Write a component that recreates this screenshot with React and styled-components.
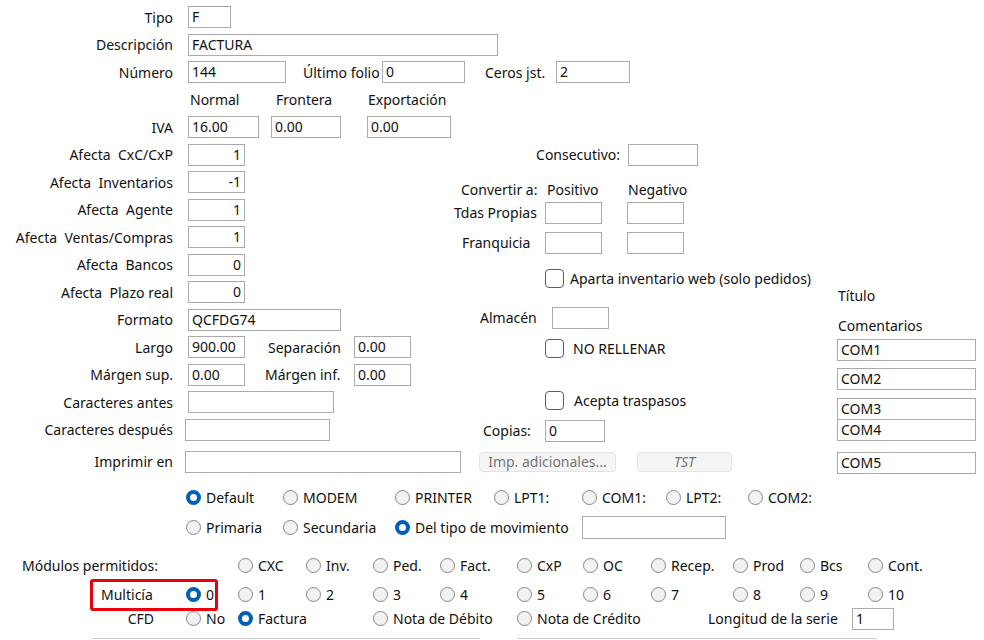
import styled, { createGlobalStyle } from 'styled-components';

const GlobalStyle = createGlobalStyle`
    html, body {
        margin: 0;
        padding: 0;
        background: #ffffff;
    }
    body {
        font-family: "Noto Sans", "Liberation Sans", sans-serif;
        font-size: 14px;
        color: #111;
    }
`;

const Page = styled.div`
    width: 984px;
    height: 640px;
    overflow: hidden;
    padding-top: 3.5px;
    box-sizing: border-box;
`;

const Row = styled.div`
    display: flex;
    align-items: center;
    height: ${p => p.$h || 27.5}px;
    margin-top: ${p => p.$mt || 0}px;
    padding-left: ${p => p.$pl || 0}px;
`;

const Label = styled.span`
    display: inline-block;
    width: ${p => p.$w || 175}px;
    text-align: ${p => p.$left ? 'left' : 'right'};
    padding-right: ${p => p.$pr || 0}px;
    box-sizing: border-box;
    white-space: pre;
    flex: none;
`;

const Text = styled.span`
    white-space: pre;
    flex: none;
    margin-left: ${p => p.$ml || 0}px;
    width: ${p => p.$w ? `${p.$w}px` : 'auto'};
`;

const Field = styled.div`
    flex: none;
    box-sizing: border-box;
    width: ${p => p.$w}px;
    height: ${p => p.$h || 22}px;
    margin-left: ${p => p.$ml || 0}px;
    margin-top: ${p => p.$mt || 0}px;
    border: 1px solid #ababab;
    background: #fff;
    padding: 0 3px;
    line-height: 20px;
    text-align: ${p => p.$right ? 'right' : 'left'};
    white-space: nowrap;
    overflow: hidden;
`;

const Main = styled.div`
    display: grid;
    grid-template-columns: 836px 1fr;
`;

const Columns = styled.div`
    display: grid;
    grid-template-columns: 440px 1fr;
`;

const Column = styled.div`
    display: flex;
    flex-direction: column;
`;

const Box = styled.span`
    flex: none;
    width: 19px;
    height: 19px;
    box-sizing: border-box;
    border: 1.5px solid #5d5d5d;
    border-radius: 4px;
    background: #fff;
    margin-right: ${p => p.$gap || 6}px;
`;

const Button = styled.div`
    flex: none;
    box-sizing: border-box;
    width: ${p => p.$w}px;
    height: 20px;
    margin-left: ${p => p.$ml || 0}px;
    border: 1px solid #e3e3e3;
    border-radius: 4px;
    background: #f5f5f5;
    color: #777;
    font-style: ${p => p.$italic ? 'italic' : 'normal'};
    text-align: center;
    line-height: 18px;
`;

const Dot = styled.span`
    flex: none;
    width: 15px;
    height: 15px;
    box-sizing: border-box;
    border-radius: 50%;
    margin-right: 5px;
    border: ${p => p.$on ? '4.5px solid #005fb8' : '1px solid #878787'};
    background: ${p => p.$on ? '#fff' : '#f2f2f2'};
`;

const RadioItem = styled.label`
    display: flex;
    align-items: center;
    flex: none;
    width: ${p => p.$w ? `${p.$w}px` : 'auto'};
    white-space: nowrap;
    grid-column: ${p => p.$col || 'auto'};
`;

const Radio = ({ on, children, w, col }) => (
    <RadioItem $w={w} $col={col}>
        <Dot $on={on} />
        {children}
    </RadioItem>
);

const Grid = styled.div`
    display: grid;
    grid-template-columns: 186px 52px 68px 67px 67px 77px 66px 68px 82px 67px 68px 1fr;
    align-items: center;
    height: ${p => p.$h || 22}px;
    margin-top: ${p => p.$mt || 0}px;
`;

const GridLabel = styled.span`
    grid-column: 1;
    padding-left: ${p => p.$pl || 0}px;
    padding-right: ${p => p.$pr || 0}px;
    text-align: ${p => p.$right ? 'right' : 'left'};
    white-space: nowrap;
`;

const Highlight = styled.div`
    grid-column: 1 / 3;
    margin-left: 90px;
    width: 128px;
    height: 32px;
    box-sizing: border-box;
    border: 3px solid #e8000b;
    border-radius: 3px;
    display: flex;
    align-items: center;
    padding: 0 1px 0 8px;
    justify-content: space-between;
`;

const Serie = styled.div`
    grid-column: 9 / span 4;
    display: flex;
    align-items: center;
    padding-left: 57px;
`;

const Rule = styled.div`
    display: flex;
    gap: 37px;
    margin: 8px 0 0 92px;
    span {
        height: 1px;
        background: #cfcfcf;
    }
    span:first-child { width: 388px; }
    span:last-child { width: 360px; }
`;

const numbers = [
    ['Afecta  CxC/CxP', '1'],
    ['Afecta  Inventarios', '-1'],
    ['Afecta  Agente', '1'],
    ['Afecta  Ventas/Compras', '1'],
    ['Afecta  Bancos', '0'],
    ['Afecta  Plazo real', '0'],
];

const modulos = ['CXC', 'Inv.', 'Ped.', 'Fact.', 'CxP', 'OC', 'Recep.', 'Prod', 'Bcs', 'Cont.'];

const App = () => {
    return (
        <Page>
            <GlobalStyle />
            <Row>
                <Label $pr={2}>Tipo</Label>
                <Field $w={43} $ml={13}>F</Field>
            </Row>
            <Row>
                <Label $pr={2}>Descripción</Label>
                <Field $w={310} $ml={13}>FACTURA</Field>
            </Row>
            <Row>
                <Label $pr={2}>Número</Label>
                <Field $w={98} $ml={13}>144</Field>
                <Text $ml={17} $w={79}>Último folio</Text>
                <Field $w={83}>0</Field>
                <Text $ml={20} $w={71}>Ceros jst.</Text>
                <Field $w={74}>2</Field>
            </Row>
            <Row>
                <Text $ml={190} $w={86}>Normal</Text>
                <Text $w={92}>Frontera</Text>
                <Text>Exportación</Text>
            </Row>
            <Row>
                <Label $pr={2}>IVA</Label>
                <Field $w={71} $ml={13}>16.00</Field>
                <Field $w={70} $ml={12}>0.00</Field>
                <Field $w={84} $ml={26}>0.00</Field>
            </Row>

            <Main>
                <div>
                    <Columns>
                        <Column>
                            {numbers.map(([label, value]) => (
                                <Row key={label}>
                                    <Label $pr={2}>{label}</Label>
                                    <Field $w={57} $ml={13} $right>{value}</Field>
                                </Row>
                            ))}
                            <Row>
                                <Label $pr={2}>Formato</Label>
                                <Field $w={153} $ml={13}>QCFDG74</Field>
                            </Row>
                            <Row>
                                <Label $pr={2}>Largo</Label>
                                <Field $w={57} $ml={13}>900.00</Field>
                                <Text $ml={23} $w={86}>Separación</Text>
                                <Field $w={57}>0.00</Field>
                            </Row>
                            <Row>
                                <Label $pr={2}>Márgen sup.</Label>
                                <Field $w={57} $ml={13}>0.00</Field>
                                <Text $ml={20} $w={89}>Márgen inf.</Text>
                                <Field $w={57}>0.00</Field>
                            </Row>
                            <Row>
                                <Label $pr={2}>Caracteres antes</Label>
                                <Field $w={146} $ml={13} />
                            </Row>
                            <Row>
                                <Label $pr={2}>Caracteres después</Label>
                                <Field $w={145} $ml={10} />
                            </Row>
                        </Column>

                        <Column>
                            <Row>
                                <Label $w={180}>Consecutivo:</Label>
                                <Field $w={70} $ml={8} />
                            </Row>
                            <Row $h={22} $mt={10}>
                                <Text $ml={21} $w={86}>Convertir a:</Text>
                                <Text $w={81}>Positivo</Text>
                                <Text>Negativo</Text>
                            </Row>
                            <Row $h={24}>
                                <Text $ml={14} $w={91}>Tdas Propias</Text>
                                <Field $w={57} />
                                <Field $w={57} $ml={25} />
                            </Row>
                            <Row $h={24} $mt={6}>
                                <Text $ml={22} $w={83}>Franquicia</Text>
                                <Field $w={57} />
                                <Field $w={57} $ml={25} />
                            </Row>
                            <Row $h={22} $mt={13} $pl={105}>
                                <Box />
                                <Text>Aparta inventario web (solo pedidos)</Text>
                            </Row>
                            <Row $h={22} $mt={17}>
                                <Text $ml={40} $w={72}>Almacén</Text>
                                <Field $w={57} />
                            </Row>
                            <Row $h={22} $mt={9} $pl={105}>
                                <Box $gap={9} />
                                <Text>NO RELLENAR</Text>
                            </Row>
                            <Row $h={22} $mt={30} $pl={105}>
                                <Box $gap={10} />
                                <Text>Acepta traspasos</Text>
                            </Row>
                            <Row $h={22} $mt={8}>
                                <Text $ml={43} $w={62}>Copias:</Text>
                                <Field $w={60}>0</Field>
                            </Row>
                        </Column>
                    </Columns>
                    <Row $h={22} $mt={7}>
                        <Label $pr={2}>Imprimir en</Label>
                        <Field $w={276} $ml={10} />
                        <Button $w={137} $ml={18}>Imp. adicionales...</Button>
                        <Button $w={95} $ml={21} $italic>TST</Button>
                    </Row>
                </div>

                <Column>
                    <Row $h={20} $mt={144.5} $pl={2}>
                        <Text>Título</Text>
                    </Row>
                    <Row $h={20} $mt={10} $pl={2}>
                        <Text>Comentarios</Text>
                    </Row>
                    <Field $w={139} $ml={1} $mt={3}>COM1</Field>
                    <Field $w={139} $ml={1} $mt={7}>COM2</Field>
                    <Field $w={139} $ml={1} $mt={8}>COM3</Field>
                    <Field $w={139} $ml={1} $mt={-1}>COM4</Field>
                    <Field $w={139} $ml={1} $mt={11}>COM5</Field>
                </Column>
            </Main>

            <Row $h={22} $mt={13} $pl={186}>
                <Radio on w={97}>Default</Radio>
                <Radio w={112}>MODEM</Radio>
                <Radio w={99}>PRINTER</Radio>
                <Radio w={88}>LPT1:</Radio>
                <Radio w={84}>COM1:</Radio>
                <Radio w={82}>LPT2:</Radio>
                <Radio>COM2:</Radio>
            </Row>
            <Row $h={22} $mt={8} $pl={186}>
                <Radio w={97}>Primaria</Radio>
                <Radio w={112}>Secundaria</Radio>
                <Radio w={187} on>Del tipo de movimiento</Radio>
                <Field $w={144} $h={23} />
            </Row>

            <Grid $mt={16}>
                <GridLabel $pl={22}>Módulos permitidos:</GridLabel>
                {modulos.map((m, i) => (
                    <Radio key={m} col={i + 3}>{m}</Radio>
                ))}
            </Grid>
            <Grid $h={32} $mt={2}>
                <Highlight>
                    <span>Multicía</span>
                    <Radio on>0</Radio>
                </Highlight>
                {Array.from({ length: 10 }, (_, i) => (
                    <Radio key={i} col={i + 3}>{i + 1}</Radio>
                ))}
            </Grid>
            <Grid $mt={-3}>
                <GridLabel $right $pr={32}>CFD</GridLabel>
                <Radio col={2}>No</Radio>
                <Radio col={3} on>Factura</Radio>
                <Radio col={5}>Nota de Débito</Radio>
                <Radio col={7}>Nota de Crédito</Radio>
                <Serie>
                    <Text $w={144}>Longitud de la serie</Text>
                    <Field $w={42}>1</Field>
                </Serie>
            </Grid>
            <Rule>
                <span />
                <span />
            </Rule>
        </Page>
    );
};

export default App;
